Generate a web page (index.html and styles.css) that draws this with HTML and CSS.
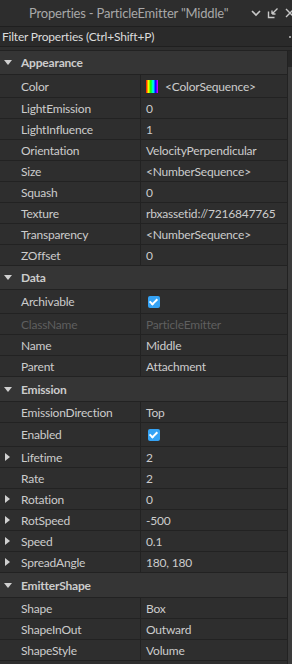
FILE: index.html
```html
<!DOCTYPE html>
<html lang="en">
<head>
    <meta charset="UTF-8">
    <meta name="viewport" content="width=device-width, initial-scale=1.0">
    <title>Properties</title>
    <link rel="stylesheet" href="styles.css">
</head>
<body>
    <div class="panel">
        <div class="title-bar">
            <span class="title">Properties - ParticleEmitter "Middle"</span>
            <div class="title-icons">
                <svg width="12" height="12" viewBox="0 0 12 12"><path d="M2 4 L6 8 L10 4" fill="none" stroke="#c8c8c8" stroke-width="1.6"/></svg>
                <svg width="12" height="12" viewBox="0 0 12 12"><path d="M1.5 4.5 V10.5 H7.5" fill="none" stroke="#c8c8c8" stroke-width="1.4"/><path d="M5 7 L10.5 1.5 M5 7 V3.5 M5 7 H8.5" fill="none" stroke="#c8c8c8" stroke-width="1.4"/></svg>
                <svg width="12" height="12" viewBox="0 0 12 12"><path d="M2 2 L10 10 M10 2 L2 10" fill="none" stroke="#c8c8c8" stroke-width="1.4"/></svg>
            </div>
        </div>

        <div class="filter-bar">
            <span>Filter Properties (Ctrl+Shift+P)</span>
            <span class="filter-mark"></span>
        </div>

        <div class="list-wrap">
            <div class="list">
                <div class="section"><span class="tri down"></span>Appearance</div>
                <div class="row color-row"><div class="name">Color</div><div class="value"><span class="swatch"></span><span class="swatch-label">&lt;ColorSequence&gt;</span></div></div>
                <div class="row"><div class="name">LightEmission</div><div class="value">0</div></div>
                <div class="row"><div class="name">LightInfluence</div><div class="value">1</div></div>
                <div class="row"><div class="name">Orientation</div><div class="value">VelocityPerpendicular</div></div>
                <div class="row"><div class="name">Size</div><div class="value">&lt;NumberSequence&gt;</div></div>
                <div class="row"><div class="name">Squash</div><div class="value">0</div></div>
                <div class="row"><div class="name">Texture</div><div class="value">rbxassetid://7216847765</div></div>
                <div class="row"><div class="name">Transparency</div><div class="value">&lt;NumberSequence&gt;</div></div>
                <div class="row"><div class="name">ZOffset</div><div class="value">0</div></div>

                <div class="section"><span class="tri down"></span>Data</div>
                <div class="row tall"><div class="name">Archivable</div><div class="value"><span class="check"></span></div></div>
                <div class="row dim"><div class="name">ClassName</div><div class="value">ParticleEmitter</div></div>
                <div class="row"><div class="name">Name</div><div class="value">Middle</div></div>
                <div class="row"><div class="name">Parent</div><div class="value">Attachment</div></div>

                <div class="section wide"><span class="tri down"></span>Emission</div>
                <div class="row"><div class="name">EmissionDirection</div><div class="value">Top</div></div>
                <div class="row tall"><div class="name">Enabled</div><div class="value"><span class="check"></span></div></div>
                <div class="row"><div class="name"><span class="tri right"></span>Lifetime</div><div class="value">2</div></div>
                <div class="row"><div class="name">Rate</div><div class="value">2</div></div>
                <div class="row"><div class="name"><span class="tri right"></span>Rotation</div><div class="value">0</div></div>
                <div class="row"><div class="name"><span class="tri right"></span>RotSpeed</div><div class="value">-500</div></div>
                <div class="row"><div class="name"><span class="tri right"></span>Speed</div><div class="value">0.1</div></div>
                <div class="row"><div class="name"><span class="tri right"></span>SpreadAngle</div><div class="value">180, 180</div></div>

                <div class="section wide"><span class="tri down"></span>EmitterShape</div>
                <div class="row"><div class="name">Shape</div><div class="value">Box</div></div>
                <div class="row"><div class="name">ShapeInOut</div><div class="value">Outward</div></div>
                <div class="row"><div class="name">ShapeStyle</div><div class="value">Volume</div></div>
            </div>
            <div class="scrollbar"><div class="thumb"></div></div>
        </div>
    </div>
</body>
</html>
```

FILE: styles.css
```css
body, html {
    margin: 0;
    padding: 0;
    height: 100%;
    overflow: hidden;
    background: #2e2e2e;
    font-family: Lato, "Open Sans", sans-serif;
    font-size: 12px;
    letter-spacing: -0.2px;
    color: #cccccc;
}
.panel {
    display: flex;
    flex-direction: column;
    height: 100%;
}
.title-bar {
    height: 26px;
    display: flex;
    align-items: center;
    background: #2d2d2d;
    border-bottom: 1px solid #1f1f1f;
}
.title {
    margin-left: 29px;
    font-size: 13px;
    white-space: nowrap;
    color: #a8a8a8;
}
.title-icons {
    margin-left: auto;
    margin-right: -4px;
    display: flex;
    gap: 5px;
}
.filter-bar {
    height: 19px;
    display: flex;
    align-items: center;
    padding-left: 2px;
    background: #2a2a2a;
    border-bottom: 1px solid #1f1f1f;
    color: #dcdcdc;
}
.filter-mark {
    margin-left: auto;
    margin-right: 1px;
    width: 2px;
    height: 2px;
    background: #9a9a9a;
}
.list-wrap {
    flex: 1;
    display: flex;
    margin-top: 3px;
    border-top: 1px solid #222222;
}
.list {
    flex: 1;
}
.scrollbar {
    width: 4px;
    border-left: 1px solid #222222;
    background: #272727;
    padding-top: 16px;
}
.thumb {
    height: 100%;
    background: #3a3a3a;
}
.section {
    height: 23px;
    display: flex;
    align-items: center;
    padding-left: 4px;
    background: #353535;
    border-bottom: 1px solid #222222;
    font-weight: bold;
}
.section.wide {
    height: 24px;
}
.row {
    height: 20px;
    display: grid;
    grid-template-columns: 141px 1fr;
    border-bottom: 1px solid #222222;
}
.row.color-row {
    height: 22px;
}
.row.tall {
    height: 23px;
}
.name {
    display: flex;
    align-items: center;
    padding-left: 21px;
    position: relative;
    border-right: 1px solid #222222;
}
.value {
    display: flex;
    align-items: center;
    padding-left: 5px;
    white-space: nowrap;
}
.dim {
    color: #5f5f5f;
}
.tri {
    display: inline-block;
    width: 0;
    height: 0;
}
.tri.down {
    border-left: 4px solid transparent;
    border-right: 4px solid transparent;
    border-top: 5px solid #d0d0d0;
    margin-right: 9px;
}
.tri.right {
    position: absolute;
    left: 5px;
    top: 6px;
    border-top: 4px solid transparent;
    border-bottom: 4px solid transparent;
    border-left: 5px solid #d0d0d0;
}
.swatch {
    width: 12px;
    height: 13px;
    background: linear-gradient(to right, #ff0000, #ffff00, #00ff00, #00ffff, #0000ff, #ff00ff);
}
.swatch-label {
    margin-left: 7px;
}
.check {
    width: 12px;
    height: 12px;
    margin-left: 2px;
    border-radius: 2px;
    background: #35a3f5;
    position: relative;
}
.check::after {
    content: "";
    position: absolute;
    left: 3px;
    top: 1px;
    width: 3px;
    height: 6px;
    border-right: 2px solid #ffffff;
    border-bottom: 2px solid #ffffff;
    transform: rotate(45deg);
}
```
